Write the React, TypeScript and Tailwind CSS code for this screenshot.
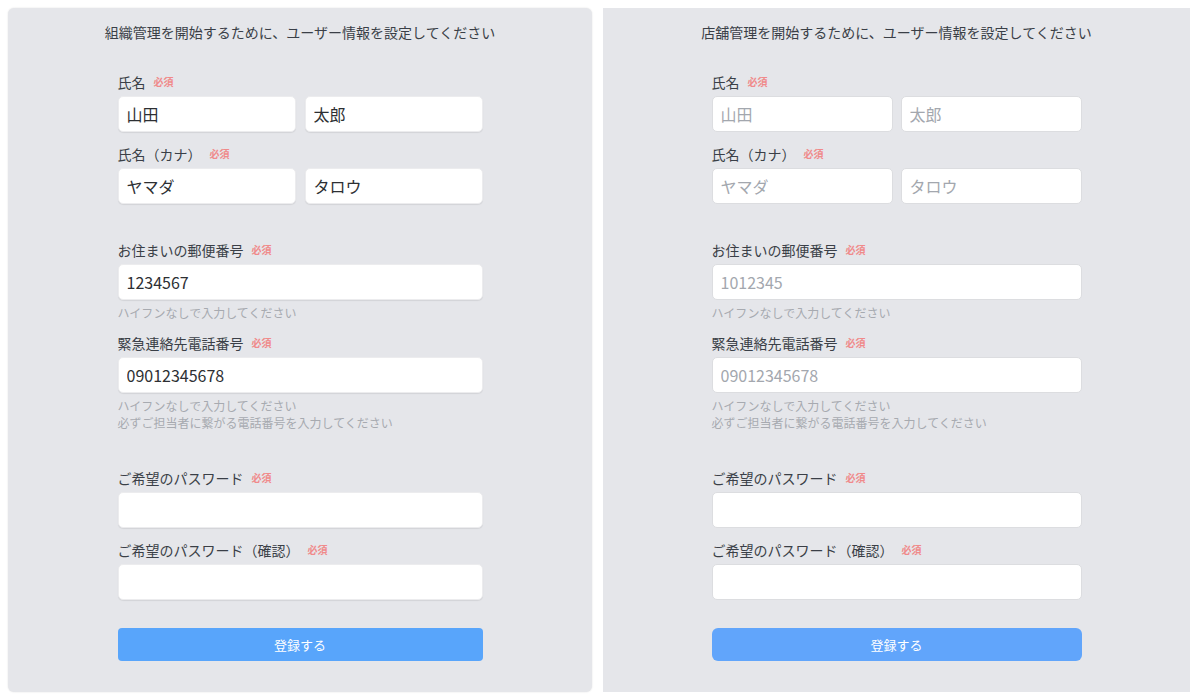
/**
 * Signup forms - 組織管理 / 店舗管理 user information setup
 */
import type { ReactNode } from 'react';

const FONT = "font-['Noto_Sans_CJK_JP','Noto_Sans',sans-serif]";

type Variant = 'filled' | 'placeholder';

function Label({ children }: { children: ReactNode }): JSX.Element {
  return (
    <div className="flex items-center h-5 mb-1 text-[14px] leading-5 text-[#3a3f47]">
      <span>{children}</span>
      <span className="ml-2 text-[10px] font-bold text-[#f08a8a]">必須</span>
    </div>
  );
}

function Field({
  value,
  variant,
  type = 'text',
}: {
  value: string;
  variant: Variant;
  type?: string;
}): JSX.Element {
  const base =
    'w-full h-9 px-2 bg-white rounded-[5px] text-[16px] outline-none border';
  if (variant === 'filled') {
    return (
      <input
        type={type}
        defaultValue={value}
        className={`${base} border-[#ececee] shadow-[0_1px_1px_rgba(0,0,0,0.08)] text-[#2d2f33]`}
      />
    );
  }
  return (
    <input
      type={type}
      placeholder={value}
      className={`${base} border-[#dcdde0] placeholder:text-[#a3a7ae] text-[#2d2f33]`}
    />
  );
}

function Hint({ children }: { children: ReactNode }): JSX.Element {
  return <p className="text-[12px] leading-[17px] text-[#a7aab0]">{children}</p>;
}

function SignupPanel({
  title,
  variant,
  width,
  formWidth,
  gap,
  rounded,
}: {
  title: string;
  variant: Variant;
  width: string;
  formWidth: string;
  gap: string;
  rounded: boolean;
}): JSX.Element {
  const filled = variant === 'filled';
  return (
    <section
      className={`${width} h-[684px] shrink-0 bg-[#e5e6ea] pt-[14px] flex flex-col items-center ${
        rounded ? 'rounded-md shadow-[0_0_2px_rgba(0,0,0,0.12)]' : ''
      }`}
    >
      <h1 className="text-[14px] leading-5 text-[#3a3f47]">{title}</h1>

      <div className={`${formWidth} mt-[30px] flex flex-col`}>
        {/* 氏名 */}
        <Label>氏名</Label>
        <div className={`flex ${gap}`}>
          <Field value="山田" variant={variant} />
          <Field value="太郎" variant={variant} />
        </div>

        <div className="mt-3">
          <Label>氏名（カナ）</Label>
        </div>
        <div className={`flex ${gap}`}>
          <Field value="ヤマダ" variant={variant} />
          <Field value="タロウ" variant={variant} />
        </div>

        {/* 連絡先 */}
        <div className="mt-9">
          <Label>お住まいの郵便番号</Label>
        </div>
        <Field value={filled ? '1234567' : '1012345'} variant={variant} />
        <div className="mt-1">
          <Hint>ハイフンなしで入力してください</Hint>
        </div>

        <div className="mt-3">
          <Label>緊急連絡先電話番号</Label>
        </div>
        <Field value="09012345678" variant={variant} />
        <div className="mt-1">
          <Hint>ハイフンなしで入力してください</Hint>
          <Hint>必ずご担当者に繋がる電話番号を入力してください</Hint>
        </div>

        {/* パスワード */}
        <div className="mt-[37px]">
          <Label>ご希望のパスワード</Label>
        </div>
        <Field value="" variant={variant} type="password" />

        <div className="mt-3">
          <Label>ご希望のパスワード（確認）</Label>
        </div>
        <Field value="" variant={variant} type="password" />

        <button
          className={`mt-7 h-[33px] w-full text-white text-[13px] ${
            filled ? 'bg-[#58a5fb] rounded-sm' : 'bg-[#61a5fb] rounded-md'
          }`}
        >
          登録する
        </button>
      </div>
    </section>
  );
}

export default function App(): JSX.Element {
  return (
    <div className={`${FONT} w-[1200px] h-[699px] bg-white pt-2 pl-2 flex gap-[11px]`}>
      <SignupPanel
        title="組織管理を開始するために、ユーザー情報を設定してください"
        variant="filled"
        width="w-[584px]"
        formWidth="w-[365px]"
        gap="gap-[9px]"
        rounded
      />
      <SignupPanel
        title="店舗管理を開始するために、ユーザー情報を設定してください"
        variant="placeholder"
        width="w-[587px]"
        formWidth="w-[370px]"
        gap="gap-2"
        rounded={false}
      />
    </div>
  );
}
